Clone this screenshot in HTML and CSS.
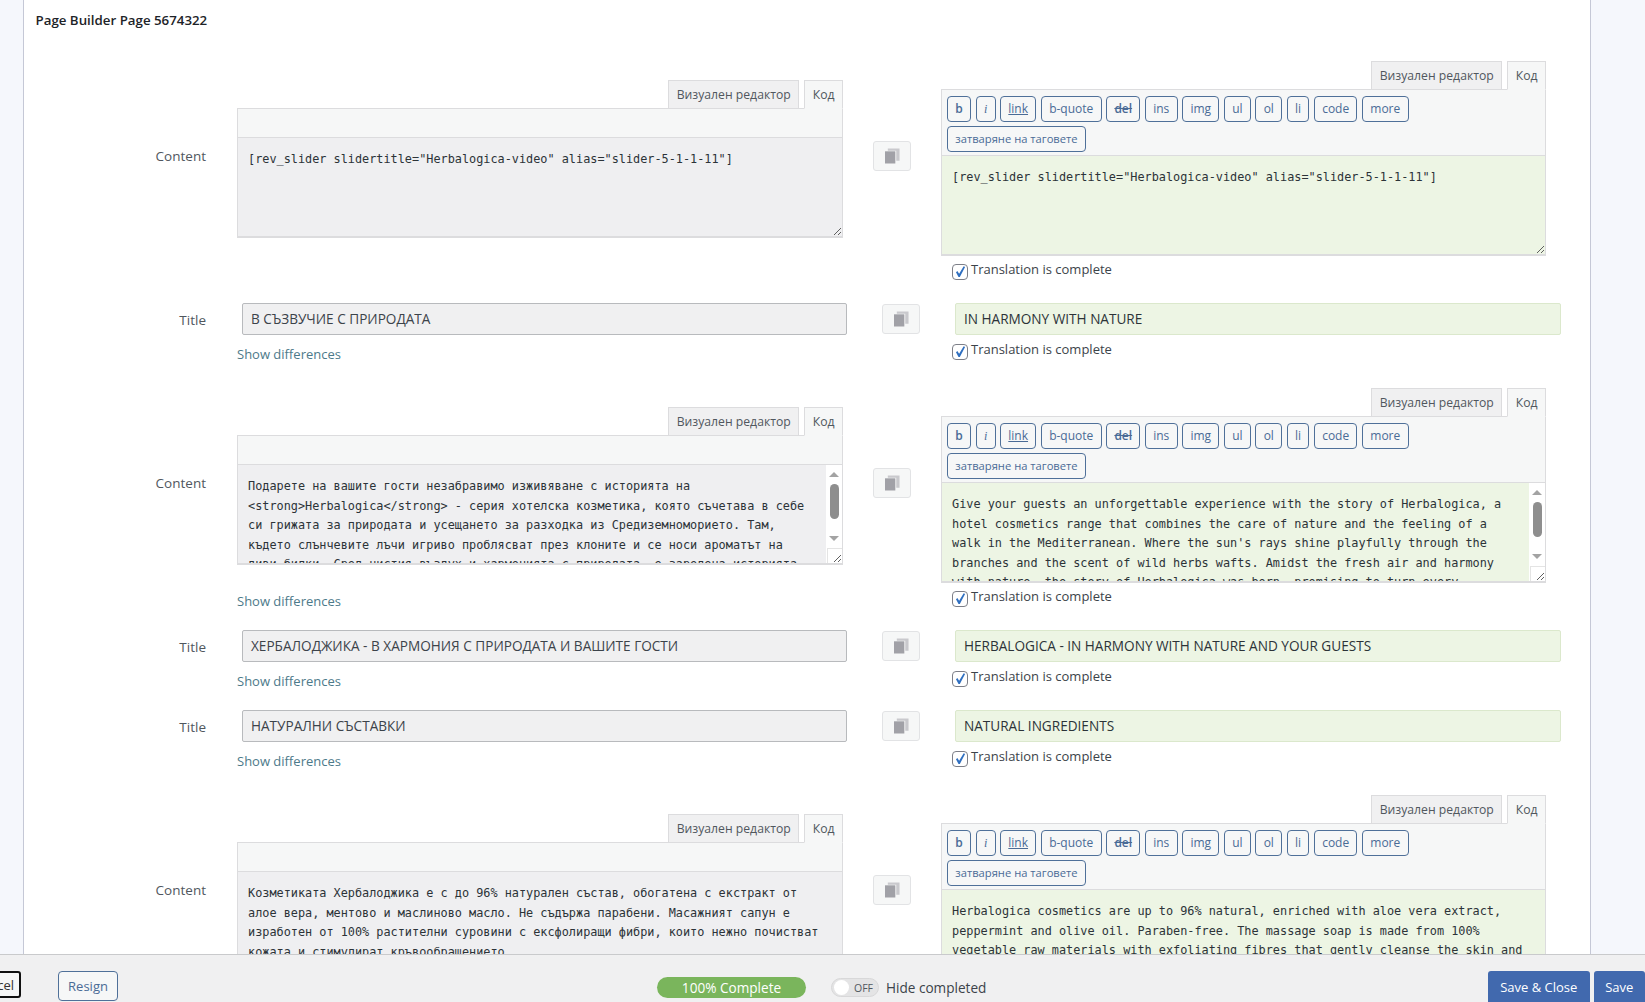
FILE: index.html
```html
<!DOCTYPE html>
<html lang="bg">
<head>
<meta charset="utf-8">
<title>Page Builder Page 5674322</title>
<link rel="stylesheet" href="styles.css">
</head>
<body>
<svg class="defs" width="0" height="0" aria-hidden="true">
  <symbol id="copy" viewBox="0 0 16 16">
    <path class="copy-back" d="M3 0h12.5v13H12V2.5H3z"/>
    <rect class="copy-front" x="0" y="3" width="11" height="13"/>
  </symbol>
  <symbol id="tick" viewBox="0 0 16 16">
    <path class="tick-path" d="M3.400 8.200 5 6.800l2 3.200L12.200 1.400l1.600.9-6 11.400H6.300z"/>
  </symbol>
  <symbol id="grip" viewBox="0 0 10 10">
    <path class="grip-path" d="M9 2 2 9M9 6 6 9"/>
  </symbol>
</svg>
<main class="main">
<div class="panel">
  <h1 class="heading">Page Builder Page 5674322</h1>

  <section class="row row-content">
    <div class="label label-content">Content</div>
    <div class="source-editor">
      <div class="tabs"><span class="tab">Визуален редактор</span><span class="tab tab-active">Код</span></div>
      <div class="toolbar toolbar-empty"></div>
      <div class="area area-source">[rev_slider slidertitle="Herbalogica-video" alias="slider-5-1-1-11"]
        <span class="grip"><svg class="grip-icon"><use href="#grip"/></svg></span>
      </div>
    </div>
    <button class="copy copy-content"><svg class="copy-icon"><use href="#copy"/></svg></button>
    <div class="target-editor">
      <div class="tabs"><span class="tab">Визуален редактор</span><span class="tab tab-active">Код</span></div>
      <div class="toolbar">
        <span class="qt qt-b">b</span><span class="qt qt-i">i</span><span class="qt qt-link">link</span><span class="qt">b-quote</span><span class="qt qt-del">del</span><span class="qt">ins</span><span class="qt">img</span><span class="qt">ul</span><span class="qt">ol</span><span class="qt">li</span><span class="qt">code</span><span class="qt">more</span><span class="qt qt-close">затваряне на таговете</span>
      </div>
      <div class="area area-target">[rev_slider slidertitle="Herbalogica-video" alias="slider-5-1-1-11"]
        <span class="grip"><svg class="grip-icon"><use href="#grip"/></svg></span>
      </div>
      <label class="complete complete-editor"><span class="check"><svg class="tick"><use href="#tick"/></svg></span>Translation is complete</label>
    </div>
  </section>

  <section class="row row-title row-title-last">
    <div class="label">Title</div>
    <div class="source-field">
      <div class="field field-source">В СЪЗВУЧИЕ С ПРИРОДАТА</div>
      <a class="diff">Show differences</a>
    </div>
    <button class="copy copy-title"><svg class="copy-icon"><use href="#copy"/></svg></button>
    <div class="target-field">
      <div class="field field-target">IN HARMONY WITH NATURE</div>
      <label class="complete"><span class="check"><svg class="tick"><use href="#tick"/></svg></span>Translation is complete</label>
    </div>
  </section>

  <section class="row row-content">
    <div class="label label-content">Content</div>
    <div class="source-editor">
      <div class="tabs"><span class="tab">Визуален редактор</span><span class="tab tab-active">Код</span></div>
      <div class="toolbar toolbar-empty"></div>
      <div class="area area-source">Подарете на вашите гости незабравимо изживяване с историята на<br>&lt;strong&gt;Herbalogica&lt;/strong&gt; - серия хотелска козметика, която съчетава в себе<br>си грижата за природата и усещането за разходка из Средиземноморието. Там,<br>където слънчевите лъчи игриво проблясват през клоните и се носи ароматът на<br>диви билки. Сред чистия въздух и хармонията с природата, е заредена историята
        <span class="scroll"><span class="arrow-up"></span><span class="thumb"></span><span class="arrow-down"></span></span>
        <span class="grip grip-boxed"><svg class="grip-icon"><use href="#grip"/></svg></span>
      </div>
      <a class="diff diff-editor">Show differences</a>
    </div>
    <button class="copy copy-content"><svg class="copy-icon"><use href="#copy"/></svg></button>
    <div class="target-editor">
      <div class="tabs"><span class="tab">Визуален редактор</span><span class="tab tab-active">Код</span></div>
      <div class="toolbar">
        <span class="qt qt-b">b</span><span class="qt qt-i">i</span><span class="qt qt-link">link</span><span class="qt">b-quote</span><span class="qt qt-del">del</span><span class="qt">ins</span><span class="qt">img</span><span class="qt">ul</span><span class="qt">ol</span><span class="qt">li</span><span class="qt">code</span><span class="qt">more</span><span class="qt qt-close">затваряне на таговете</span>
      </div>
      <div class="area area-target">Give your guests an unforgettable experience with the story of Herbalogica, a<br>hotel cosmetics range that combines the care of nature and the feeling of a<br>walk in the Mediterranean. Where the sun's rays shine playfully through the<br>branches and the scent of wild herbs wafts. Amidst the fresh air and harmony<br>with nature, the story of Herbalogica was born, promising to turn every
        <span class="scroll"><span class="arrow-up"></span><span class="thumb"></span><span class="arrow-down"></span></span>
        <span class="grip grip-boxed"><svg class="grip-icon"><use href="#grip"/></svg></span>
      </div>
      <label class="complete complete-editor"><span class="check"><svg class="tick"><use href="#tick"/></svg></span>Translation is complete</label>
    </div>
  </section>

  <section class="row row-title">
    <div class="label">Title</div>
    <div class="source-field">
      <div class="field field-source">ХЕРБАЛОДЖИКА - В ХАРМОНИЯ С ПРИРОДАТА И ВАШИТЕ ГОСТИ</div>
      <a class="diff">Show differences</a>
    </div>
    <button class="copy copy-title"><svg class="copy-icon"><use href="#copy"/></svg></button>
    <div class="target-field">
      <div class="field field-target">HERBALOGICA - IN HARMONY WITH NATURE AND YOUR GUESTS</div>
      <label class="complete"><span class="check"><svg class="tick"><use href="#tick"/></svg></span>Translation is complete</label>
    </div>
  </section>

  <section class="row row-title row-title-last">
    <div class="label">Title</div>
    <div class="source-field">
      <div class="field field-source">НАТУРАЛНИ СЪСТАВКИ</div>
      <a class="diff">Show differences</a>
    </div>
    <button class="copy copy-title"><svg class="copy-icon"><use href="#copy"/></svg></button>
    <div class="target-field">
      <div class="field field-target">NATURAL INGREDIENTS</div>
      <label class="complete"><span class="check"><svg class="tick"><use href="#tick"/></svg></span>Translation is complete</label>
    </div>
  </section>

  <section class="row row-content">
    <div class="label label-content">Content</div>
    <div class="source-editor">
      <div class="tabs"><span class="tab">Визуален редактор</span><span class="tab tab-active">Код</span></div>
      <div class="toolbar toolbar-empty"></div>
      <div class="area area-source">Козметиката Хербалоджика е с до 96% натурален състав, обогатена с екстракт от<br>алое вера, ментово и маслиново масло. Не съдържа парабени. Масажният сапун е<br>изработен от 100% растителни суровини с ексфолиращи фибри, които нежно почистват<br>кожата и стимулират кръвообращението.</div>
    </div>
    <button class="copy copy-content"><svg class="copy-icon"><use href="#copy"/></svg></button>
    <div class="target-editor">
      <div class="tabs"><span class="tab">Визуален редактор</span><span class="tab tab-active">Код</span></div>
      <div class="toolbar">
        <span class="qt qt-b">b</span><span class="qt qt-i">i</span><span class="qt qt-link">link</span><span class="qt">b-quote</span><span class="qt qt-del">del</span><span class="qt">ins</span><span class="qt">img</span><span class="qt">ul</span><span class="qt">ol</span><span class="qt">li</span><span class="qt">code</span><span class="qt">more</span><span class="qt qt-close">затваряне на таговете</span>
      </div>
      <div class="area area-target">Herbalogica cosmetics are up to 96% natural, enriched with aloe vera extract,<br>peppermint and olive oil. Paraben-free. The massage soap is made from 100%<br>vegetable raw materials with exfoliating fibres that gently cleanse the skin and<br>stimulate blood circulation.</div>
    </div>
  </section>
</div>
</main>
<footer class="footer">
  <button class="btn btn-cancel">Cancel</button>
  <button class="btn btn-resign">Resign</button>
  <div class="status">
    <div class="progress">100% Complete</div>
    <span class="toggle"><span class="knob"></span><span class="toggle-text">OFF</span></span>
    <span class="hide-label">Hide completed</span>
  </div>
  <button class="btn btn-primary btn-save-close">Save &amp; Close</button>
  <button class="btn btn-primary btn-save">Save</button>
</footer>
</body>
</html>
```
FILE: styles.css
```css
* { box-sizing: border-box; }
html, body { height: 100%; }
body {
  margin: 0;
  display: flex;
  flex-direction: column;
  height: 1002px;
  overflow: hidden;
  background: #f5f7fc;
  color: #3c434a;
  font-family: "Open Sans", "Noto Sans", sans-serif;
  font-size: 13px;
}
.defs { display: block; width: 0; height: 0; }
.main { flex: 1; min-height: 0; overflow: hidden; padding-left: 23px; }
.panel {
  width: 1568px;
  min-height: 100%;
  background: #fff;
  border-left: 1px solid #c5c8d6;
  border-right: 1px solid #c5c8d6;
}
.heading {
  margin: 0;
  height: 61px;
  padding: 10px 0 0 11.5px;
  font-size: 13.3px;
  line-height: 20px;
  font-weight: 600;
  color: #1d2327;
}

.row { display: flex; align-items: flex-start; }
.row-content { height: 242px; }
.row-title { height: 80px; }
.row-title-last { height: 85px; }
.label {
  width: 182px;
  flex: none;
  text-align: right;
  font-size: 13.5px;
  line-height: 20px;
  color: #50575e;
  margin-top: 7px;
}
.label-content { margin-top: 85px; }

.source-editor { width: 606px; flex: none; margin: 19px 0 0 31px; }
.target-editor { width: 605px; flex: none; margin-left: 30px; }
.source-field { width: 610px; flex: none; margin-left: 31px; }
.target-field { width: 608px; flex: none; margin-left: 32px; }

.tabs { display: flex; justify-content: flex-end; gap: 5px; height: 28px; position: relative; z-index: 1; }
.tab {
  height: 29px;
  padding: 0 7.5px;
  font-size: 12.2px;
  line-height: 27px;
  color: #50575e;
  background: #f0f0f1;
  border: 1px solid #dcdcde;
}
.tab-active { background: #f6f7f7; border-bottom-color: #f6f7f7; }
.toolbar {
  display: flex;
  flex-wrap: wrap;
  gap: 4px 4.5px;
  height: 67px;
  padding: 5.5px 5px 0;
  background: #f6f7f7;
  border: 1px solid #dcdcde;
  align-content: flex-start;
}
.toolbar-empty { height: 30px; }
.qt {
  height: 26px;
  padding: 0 7.3px;
  border: 1px solid #4f7099;
  border-radius: 4px;
  background: #f6f7f7;
  color: #4a6b96;
  font-size: 12px;
  line-height: 24px;
}
.qt-b { font-weight: 600; }
.qt-i { font-style: italic; font-family: "Liberation Serif", serif; }
.qt-link { text-decoration: underline; }
.qt-del { text-decoration: line-through; font-weight: 600; }
.qt-close { font-size: 11.2px; }

.area {
  position: relative;
  height: 100px;
  padding: 12px 10px 0;
  overflow: hidden;
  font-family: "DejaVu Sans Mono", monospace;
  font-size: 11.85px;
  line-height: 19.5px;
  color: #2c3338;
  border: 1px solid #dcdcde;
  border-top: 0;
  border-bottom-width: 2px;
  white-space: nowrap;
}
.area-source { background: #efeff1; }
.area-target { background: #edf5e4; }
.grip {
  position: absolute;
  right: 0;
  bottom: 0;
  width: 15px;
  height: 15px;
  display: flex;
  align-items: flex-end;
  justify-content: flex-end;
}
.grip-boxed { background: #fff; border-left: 1px solid #e4e4e4; border-top: 1px solid #e4e4e4; }
.grip-icon { width: 10px; height: 10px; display: block; }
.grip-path { stroke: #5f5f5f; stroke-width: 1; fill: none; }
.scroll {
  position: absolute;
  top: 0;
  right: 0;
  bottom: 0;
  width: 16px;
  background: #fff;
  display: block;
}
.arrow-up, .arrow-down {
  position: absolute;
  left: 3px;
  width: 0;
  height: 0;
  border-left: 5px solid transparent;
  border-right: 5px solid transparent;
}
.arrow-up { top: 7px; border-bottom: 5px solid #a3a3a3; }
.arrow-down { top: 71px; border-top: 5px solid #a3a3a3; }
.thumb {
  position: absolute;
  left: 3.5px;
  top: 19px;
  width: 9px;
  height: 35px;
  border-radius: 5px;
  background: #8e8e8e;
}

.copy {
  flex: none;
  width: 38px;
  height: 30px;
  padding: 0;
  background: #f6f7f7;
  border: 1px solid #e2e3e5;
  border-radius: 3px;
  display: flex;
  align-items: center;
  justify-content: center;
}
.copy-content { margin: 80px 0 0 30px; }
.copy-title { margin: 1px 0 0 35px; }
.copy-icon { width: 15px; height: 16px; display: block; }
.copy-back { fill: #c9c9cd; }
.copy-front { fill: #a1a1a7; }

.field {
  height: 32px;
  padding: 0 8px;
  font-size: 13.6px;
  line-height: 30px;
  border-radius: 2px;
  width: 605.5px;
}
.field-source {
  margin-left: 5px;
  width: 604.5px;
  color: #3c434a;
  background: #f0f0f1;
  border: 1px solid #b8babd;
}
.field-target {
  margin-left: 3px;
  color: #2c3338;
  background: #edf5e4;
  border: 1px solid #dbe8cc;
}
.diff {
  display: block;
  margin-top: 9px;
  font-size: 13px;
  line-height: 20px;
  color: #4d7a8a;
}
.diff-editor { margin-top: 26px; }
.complete {
  display: flex;
  align-items: flex-start;
  gap: 3px;
  margin-top: 6px;
  font-size: 13px;
  line-height: 17px;
  color: #3c434a;
}
.complete-editor { margin: 5px 0 0 11px; }
.check {
  width: 16px;
  height: 16px;
  flex: none;
  border: 1px solid #7d7f88;
  border-radius: 4px;
  background: #fff;
  margin-top: 3px;
  display: flex;
  align-items: center;
  justify-content: center;
}
.tick { width: 14px; height: 14px; display: block; }
.tick-path { fill: #2f6fc0; }

.footer {
  flex: none;
  height: 48px;
  display: flex;
  align-items: flex-start;
  background: #f0f0f1;
  border-top: 1px solid #c9cacc;
  overflow: hidden;
  position: relative;
}
.btn { font-family: inherit; font-size: 13px; padding: 0; margin-top: 16px; }
.btn-cancel {
  width: 64px;
  height: 27px;
  margin-left: -43px;
  padding-left: 10px;
  background: #f6f7f7;
  border: 2px solid #111;
  border-radius: 3px;
  color: #333;
}
.btn-resign {
  width: 60px;
  height: 30px;
  margin-left: 37px;
  background: #f6f7f7;
  border: 1px solid #4f7099;
  border-radius: 4px;
  color: #4a6b96;
}
.status { display: flex; align-items: center; margin: 22px 0 0 540px; height: 21px; }
.progress {
  width: 149px;
  height: 21px;
  margin-left: -1px;
  border-radius: 11px;
  background: #7ab55c;
  color: #fff;
  text-align: center;
  font-size: 13.6px;
  line-height: 21px;
}
.toggle {
  width: 48px;
  height: 19px;
  margin-left: 25px;
  border-radius: 10px;
  background: #e4e4e5;
  border: 1px solid #d8d8d9;
  display: flex;
  align-items: center;
}
.knob { width: 15px; height: 15px; margin-left: 2px; border-radius: 50%; background: #fff; }
.toggle-text { font-size: 10.5px; color: #50575e; margin-left: 5px; }
.hide-label { margin-left: 7px; font-size: 13.6px; color: #3c434a; }
.btn-primary {
  height: 31px;
  background: #4169ae;
  border: 0;
  border-radius: 3px 3px 0 0;
  color: #fff;
}
.btn-save-close { width: 101.5px; margin-left: auto; }
.btn-save { width: 51.5px; margin-left: 4px; }
```
